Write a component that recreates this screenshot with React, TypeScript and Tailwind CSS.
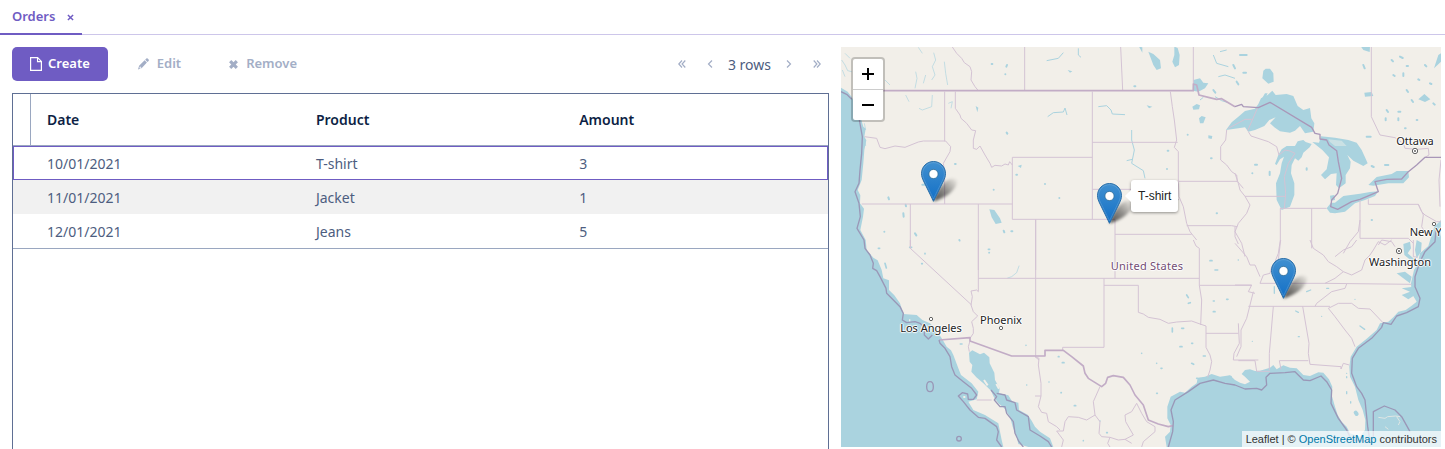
import React from "react";

const orders = [
  { date: "10/01/2021", product: "T-shirt", amount: 3 },
  { date: "11/01/2021", product: "Jacket", amount: 1 },
  { date: "12/01/2021", product: "Jeans", amount: 5 },
];

// Positions on the 600 x 400 map canvas.
const markers = [
  { name: "Jacket", x: 80, y: 114 },
  { name: "T-shirt", x: 256, y: 136 },
  { name: "Jeans", x: 430, y: 211 },
];

const cities = [
  { name: "Ottawa", x: 574, y: 94, dot: [574, 104], capital: true },
  { name: "New York", x: 593, y: 185, dot: [593, 177], capital: false },
  { name: "Washington", x: 559, y: 215, dot: [558, 204], capital: true },
  { name: "Los Angeles", x: 90, y: 281, dot: [90, 272], capital: false },
  { name: "Phoenix", x: 160, y: 273, dot: [160, 281], capital: false },
];

const place = (x: number, y: number) => ({ left: `${x / 6}%`, top: `${y / 4}%` });

function FileIcon() {
  return (
    <svg width="12" height="14" viewBox="0 0 12 14" fill="none" stroke="currentColor" aria-hidden="true">
      <path d="M.6.6h7l3.8 3.8v9H.6z" strokeWidth="1.2" />
      <path d="M7.5.8v3.8h3.8" strokeWidth="1.1" />
    </svg>
  );
}

function PencilIcon() {
  return (
    <svg width="11" height="12" viewBox="0 0 11 12" fill="currentColor" aria-hidden="true">
      <path d="M7.200 1.700 8.300.6q.7-.6 1.400 0l.9.900q.6.7 0 1.400L9.500 4zM6.600 2.300 8.900 4.600 3.600 10.200 0 11.400 1.100 7.700zM1.900 8.500l-.5 1.500.6.6 1.300-.4v-.8h-.8v-.9z" fillRule="evenodd" />
    </svg>
  );
}

function CrossIcon({ size, thin }: { size: number; thin?: boolean }) {
  return (
    <svg width={size} height={size} viewBox="0 0 10 10" fill="none" stroke="currentColor" aria-hidden="true">
      <path d="M1.300 1.300 8.700 8.700M8.700 1.300 1.300 8.700" strokeWidth={thin ? 2.1 : 3.5} />
    </svg>
  );
}

function Chevrons({ double, flip }: { double?: boolean; flip?: boolean }) {
  return (
    <svg width="8" height="8" viewBox="0 0 8 8" fill="none" stroke="currentColor" strokeWidth="1.200" aria-hidden="true">
      <g transform={flip ? "matrix(-1 0 0 1 8 0)" : undefined}>
        {double ? <path d="M4 .5.8 4 4 7.500M7.300.5 4.100 4l3.200 3.500" /> : <path d="M6 .5 2.500 4 6 7.500" />}
      </g>
    </svg>
  );
}

function PageButton({ label, double, flip }: { label: string; double?: boolean; flip?: boolean }) {
  return (
    <button type="button" disabled aria-label={label} className="flex h-6 w-6 items-center justify-center text-[#a3aec6]">
      <Chevrons double={double} flip={flip} />
    </button>
  );
}

function Pin() {
  return (
    <svg className="block overflow-visible" width="25" height="41" viewBox="0 0 25 41" aria-hidden="true">
      <path d="M12.500 40.500C14 33 19 25 25 20c6-4 12-3 11 2-2 8-12 15-23.500 18.500z" fill="url(#pinShadow)" filter="url(#pinBlur)" />
      <path d="M12.500.5C5.800.5.5 5.800.5 12.600c0 2.700.9 5 2 7.300L12.500 40.300l10-20.400c1.100-2.300 2-4.600 2-7.300C24.500 5.800 19.200.5 12.500.5z" fill="url(#pinFill)" stroke="#2b6fa8" />
      <path d="M12.500 1.600c-6 0-10.900 4.900-10.900 11 0 2.400.8 4.600 1.900 6.900l9 18.300 9-18.300c1.100-2.300 1.900-4.500 1.900-6.900 0-6.100-4.900-11-10.900-11z" fill="none" stroke="#fff" strokeOpacity=".14" />
      <circle cx="12.500" cy="13" r="4.600" fill="#fff" stroke="#2e6c97" strokeWidth=".8" />
    </svg>
  );
}

function MapDrawing() {
  return (
    <svg className="block h-full w-full" viewBox="0 0 1800 1200" fill="none" aria-hidden="true">
      <defs>
        <linearGradient id="pinFill" x1="0" y1="0" x2="0" y2="1">
          <stop offset="0" stopColor="#4190d0" />
          <stop offset="1" stopColor="#126fc6" />
        </linearGradient>
        <linearGradient id="pinShadow" x1="0" y1="1" x2="1" y2="0">
          <stop offset="0" stopColor="#000" stopOpacity=".7" />
          <stop offset=".5" stopColor="#000" stopOpacity=".4" />
          <stop offset="1" stopColor="#000" stopOpacity="0" />
        </linearGradient>
        <filter id="pinBlur" x="-30%" y="-30%" width="160%" height="160%">
          <feGaussianBlur stdDeviation="1.500" />
        </filter>
      </defs>
      <rect width="1800" height="1200" fill="#f2efe9" />

      {/* Oceans */}
      <g fill="#aad3df">
        <path d="M0 122 20 134 32 150 48 180 60 215 67 239 74 245 70 269 76 280 70 309 67 349 62 399 50 429 58 445 57 469 69 485 66 509 58 549 74 579 77 609 97 632 110 640 122 669 127 694 144 700 144 729 160 745 177 769 187 801 227 804 244 819 267 829 280 842 292 859 304 877 317 899 330 910 337 924 352 964 360 984 392 1009 412 1034 407 1057 382 1064 397 1089 432 1104 472 1129 482 1179 487 1200 0 1200z" />
        <g transform="translate(-18 579)">
          <path d="M402 338 412 331 435 343 447 338 463 352 464 370 478 398 480 420 494 445 492 460 520 466 532 485 550 488 552 510 578 524 590 542 600 560 615 575 645 595 655 621 580 621 550 612 545 590 533 560 525 530 508 505 490 490 476 470 468 452 445 430 424 412 409 395 412 375 404 365z" />
        </g>
        <g transform="translate(1182 579)">
          <path d="M-205 621-210 590-195 575-193 555-203 535-203 500-193 470-165 455-150 458-130 440-115 430-112 413-90 410-70 402-45 410-15 406 0 420 15 428 30 433 45 425 30 410 20 402 30 390 45 388 60 393 75 392 105 383 115 375 125 388 145 376 165 383 185 385 205 405 225 408 250 397 265 398 282 418 292 440 290 465 300 500 308 525 320 545 335 560 345 580 375 590 390 570 391 540 383 510 370 480 360 440 345 410 343 380 347 350 365 320 395 296 425 270 435 250 460 245 475 232 490 215 512 210 530 197 545 185 530 160 528 130 537 90 548 72 555 40 580 18 590-15 598-40 618-60 618 621z" />
          <path d="M505 12 525 5 528 25 518 40 535 55 550 65 540 80 520 55 508 45zM545 0 560 8 558 35 545 55 540 30zM485 100 510 95 530 110 525 130 505 115zM500 145 535 140 540 165 520 178 500 165 525 155z" />
        </g>
      </g>

      {/* Lakes */}
      <g transform="translate(1182 -21)" fill="#aad3df">
        <path d="M-27 270-10 247 10 230 30 213 60 206 70 192 78 175 98 165 112 152 122 165 155 162 175 168 188 198 205 210 225 204 229 235 238 250 235 275 210 280 195 258 180 272 165 278 135 274 118 262 105 250 122 232 103 240 88 258 60 270 40 275 30 262 10 265z" />
        <path d="M120 372 130 345 140 328 155 318 180 318 188 304 205 300 212 306 230 312 224 322 205 338 200 352 190 362 180 355 170 375 168 400 178 430 178 465 165 500 140 510 125 480 123 430 135 400 140 370 147 350 135 358 125 375z" />
        <path d="M232 306 252 308 258 289 300 293 340 300 365 308 380 330 390 352 398 370 385 378 355 362 337 345 347 365 345 385 332 405 332 430 312 445 303 435 305 400 288 402 270 418 258 405 275 388 282 352 262 330z" />
        <path d="M275 505 288 488 300 488 325 468 375 461 405 456 430 454 420 468 390 480 360 490 330 515 300 520 285 518zM400 435 425 411 470 402 485 393 520 393 522 412 505 430 460 430 415 437zM85 92 92 86 105 86 115 100 116 125 100 131 82 115zM378 20H405L404 36 385 30zM388 158 410 156 415 168 390 170zM550 178 568 162 586 178 570 186zM597 85 610 45 618 40V65zM285 467 298 465 300 480 287 482zM75 185 90 160 98 160 90 178z" />
        <path d="M280 298 320 302 335 318 300 318 285 306z" fill="#e3ece8" opacity=".55" />
      </g>
      <g transform="translate(582 -21)" fill="#aad3df">
        <path d="M340 35 355 42 375 60 378 85 365 90 355 75zM418 20 428 24 434 45 432 75 420 82 412 65 418 45zM312 20 322 22 322 38zM475 120 495 115 505 128 520 130 510 145 490 155 473 152zM472 200 485 192 495 196 492 208 475 209zM492 235 500 228 512 232 505 250 495 250zM520 286 532 288 530 297 520 295zM98 90 112 94 105 98zM335 196 352 200 342 205z" />
        <path d="M190 200 215 197 228 210 232 222 270 224M38 230 55 218 85 216 90 204 96 225M290 270V300L298 330 290 370 325 392 330 415M275 362 292 358M35 62 70 55 85 38M130 25V45L138 52M535 45 545 70 580 80M555 35 575 30M495 180 505 172M540 170 560 182 580 188M550 110 570 105 600 115" stroke="#aad3df" strokeWidth="3" fill="none" />
      </g>
      <g transform="translate(-18 -21)" stroke="#aad3df">
        <path d="M463 508 478 510 495 535 500 548 482 552 470 532zM422 198 430 203 427 217zM548 378 560 374 558 384z" fill="#aad3df" stroke="none" />
        <path d="M296 38 302 60 292 80 300 105 290 120M242 95 246 115 240 145M328 65 332 100 338 135M250 22 262 40M20 60 30 75 38 92 50 95M22 90 30 110M30 40 45 55M292 165 290 200 262 210 252 205M340 190 352 185 348 205M272 105 265 130M212 165 222 185M150 120 165 135M88 250 92 270M90 300 92 318" strokeWidth="2" />
      </g>
      <g stroke="#aad3df" strokeWidth="6" strokeLinecap="round">
        <path transform="translate(-18 -21)" d="M470 72h2M516 75l-2 5M511 103h0M515 278l2 3M360 372h2M262 434h6M160 472l2 6M212 494l1 5M205 520l1 10M240 580l4 6M506 572l2 5M529 574h3M476 449h0M544 404h2M373 600h0M148 575h0" />
        <path transform="translate(582 -21)" d="M298 139h3M398 332h2M396 387h0M458 284h0M528 355h2M30 432h0M73 474h0M545 520h1M595 75l5 10M605 125l5 8M535 150l6 8" />
        <path transform="translate(1182 -21)" d="M15 45h20M25 98h8M385 75l4 10M495 50l8 4M475 105l4 3M505 100v8M515 150l4 6M530 180l4 6M455 210l4 6M452 235v6M490 215h6M395 290h12M490 235v6M510 265h2M545 240h2M595 190l4 4M570 75l4 4M450 375h10M410 378l6 3M60 374h6M104 395v10M52 400h0M410 540h1M585 130l4 2M470 60l4 4M515 78h4M550 118l3 2M215 385v4" />
        <path transform="translate(-18 579)" d="M460 28h4M462 38h1M270 40v2M260 71h2M374 2h0M130 25h4M150 70l4 14M224 22h6M376 312h5M573 316h0M575 435h0" strokeWidth="5" />
        <path transform="translate(-18 579)" d="M552 78 545 98 530 110 518 114" strokeWidth="2" />
        <path transform="translate(582 579)" d="M455 165l5 8M460 190l6-2M525 62h6M540 90h8M535 183h3M535 215h5M575 178h4M412 264v12M440 265h6M435 320h6M470 310h3M470 370l6 3M505 348h6M365 370h0M378 385h3M320 340h0M70 350h2M82 368h5M42 426h0M78 458h1M118 497h4M215 578h2M195 543h0M145 602h0M365 460h2M485 415h2M582 410h6M610 60h0" strokeWidth="5" />
        <path transform="translate(1182 579)" d="M375 258l14 10M360 178h0M190 290h3M52 304h0M260 229h0M335 410v3M335 455v6M347 485v4M335 400h0M40 395h16M60 410h12M215 155l12-5M275 145h6M182 213l8 4M118 140v20" strokeWidth="4" />
        <path transform="translate(1182 579)" d="M362 518l3 4" strokeWidth="12" />
      </g>

      {/* State borders */}
      <g stroke="#d4c3d4" strokeWidth="3" strokeLinejoin="round">
        <path transform="translate(-18 -21)" d="M569 21V152M352 21 365 40 380 55 388 68 405 80 410 95 408 120 420 140 430 152M329 155V304M88 290 125 295 135 322 150 326 180 318 210 322 250 306 265 303H332L347 320 345 335 325 370 329 395V492M361 155V205L375 225 378 235 395 250 410 270 422 272 415 300 415 325 425 328 435 318 450 345 465 370 470 382 480 376 500 378 510 372 520 375 524 365 532 375M532 352V538M532 352H772M532 538H840M602 538V690M80 492H532M430 492V690M226 492V625" />
        <path transform="translate(582 -21)" d="M257 21 263 150M475 21V132M172 155V538M172 307H428M172 448H330L365 450 400 458 432 480M406 155 412 200 418 240 425 300 418 322 430 335V424L432 470 445 500 455 550 465 575 485 600M240 583H470M240 538V715M2 538V947M430 424H607M455 557H590L607 560M575 270 572 300 557 320 557 360 575 375 590 395 605 405 607 424 625 445M600 560 600 590 610 612" />
        <path transform="translate(1182 -21)" d="M68 203 38 272M-20 265 30 238H50M40 275 48 288 100 305 125 320 132 345 150 330 165 333 180 340 160 370 148 410 152 460 148 505M30 469H152M135 505H275M136 505V600L130 640 110 690M230 505V625M0 400 10 430 15 450 30 469 45 495 35 520 10 550 0 575 20 610 30 650M375 478V595H520L535 610M375 540 370 575 345 605 325 640M400 478V493H550L560 515 570 525 605 545M550 493 565 525 560 560 575 585M409 21V230L435 285 480 293 505 310 510 325 545 328 580 325 582 345 570 352M430 615 440 600 470 605 480 620M618 360 612 420 615 500M605 545 618 545" />
        <path transform="translate(-18 579)" d="M226 0V25L410 195M430 0V155L425 150 408 153 412 170 408 195 415 215 428 228 410 245 415 265 415 280 405 295M430 115H602M405 303 400 320 403 335M425 480H470M600 350 612 360" />
        <path transform="translate(582 579)" d="M2 115H493M207 115V322H83V331M207 136H310V217L325 222 340 232 375 238 400 250 425 246 470 243 495 252 513 258V322L525 345 530 365 525 390 518 412M475 0 483 18 493 25V136L500 180 497 255M493 136H650M513 280H610M610 250 613 310 597 340 595 360H670M0 350 12 355 10 375 18 430 18 468 0 468M18 468 10 500 20 517 35 520 40 545 65 560 75 570M65 573H85L90 545 100 530 130 532 155 540 180 525 195 545 192 580 200 590 225 592 250 600 270 598 290 610M195 440 175 485 180 525M305 490 290 515 270 525 272 545 295 585 270 598M305 490 320 520 335 545 360 560 360 575 325 605 320 621M65 573 85 600 80 621M225 592 218 610 225 621" />
        <path transform="translate(1182 579)" d="M55 155 45 195 35 235 18 270 18 320 5 350M10 362H60L65 394H105M40 199H285M0 135H50L40 155 60 160M75 130H270L530 133M335 132 330 145 290 155 245 190 240 199M115 199 103 340V390M203 199 222 310 220 340 225 373 318 380V387L325 370 343 375M133 362H220M133 362 138 388M280 205 310 190 350 190 370 205 405 207 443 247M280 205 300 230 330 270 350 295 360 320M75 130 85 105 105 100 110 80 130 60 137 0M225 0 235 25 265 45 280 65 305 80 325 95 300 115 270 130M300 50 325 30 350 20 365 0M325 95 350 105 380 90 390 60 405 45 415 30 430 5 450 15 470 0M535 0V50L548 52M0 10 35 50 45 75 60 75 75 110" />
      </g>

      {/* Country borders */}
      <g stroke="#c2acc6" strokeWidth="5" strokeLinejoin="round">
        <path d="M127 131H1057V111L1067 114 1074 144 1102 151 1127 157 1142 155 1162 167 1182 179" />
        <path transform="translate(1182 -21)" d="M0 200 20 193 25 200 70 203 105 187 230 262 240 280 255 283 255 297 275 300 282 315 305 332 310 365 320 415 308 460 290 480 287 500 308 508 350 485 375 478 430 455 420 425 455 418 500 417 520 395 545 375 570 352H618" stroke="#a997b8" strokeWidth="4" />
        <path transform="translate(-18 579)" d="M312 300 405 293V303L530 348H630V331H685L710 350 745 378 750 400 760 415 800 440 812 430 818 412 835 407 865 412 885 435 900 465 925 495 940 540 970 552 1000 560 1014 557" />
      </g>

      {/* Maritime borders */}
      <g stroke="#9a97b7" strokeWidth="4" strokeLinejoin="round">
        <path transform="translate(-18 -21)" d="M18 155 35 163 50 178M73 240 82 290 80 340 75 390 72 430 60 455 72 490 76 530 66 565 87 600 90 625 105 645 115 670 113 685 125 692 135 710 153 745 155 760 195 800 205 820 202 840 215 848 240 845 255 850 268 862 268 885 280 897 292 885M312 900 315 910 330 925 345 950 350 980 360 1005 385 1025 410 1045 425 1065 415 1078 400 1078 398 1062 382 1058 370 1068 385 1085 405 1110 430 1132 450 1135 485 1160 490 1175 485 1200 500 1221" />
        <path transform="translate(-18 579)" d="M275 440q0-15 10-15t10 15-10 15-10-15M365 596a7 7 0 1 0 14 0 7 7 0 1 0-14 0M468 450 485 470 478 480 495 500 510 500 515 520 535 545 540 580 552 605 565 621M485 460 510 465 515 480 540 488 545 510 580 530 585 570 615 588 640 605 650 621" />
        <path transform="translate(1182 579)" d="M-200 621-187 575-185 545-192 510-180 480-140 455-105 430-65 420-30 430 0 435 30 447 65 445 80 450 95 435 93 412 105 400 150 398 180 395 205 420 225 422 258 408 275 425 290 450 288 490 310 535 335 570 350 600 405 605 398 560 390 480 380 460 365 440 350 400 352 355 370 325 410 295 440 262 445 248 468 253 485 228 515 218 550 200 555 175 540 140 540 110 555 65 570 35 600 5 603-30M415 600V515L448 498 480 510 500 530 525 575" />
      </g>
      <path transform="translate(1182 579)" d="M430 532 450 535 458 530 482 528 495 530M485 530 495 545 490 555M450 560 460 568" stroke="#dfe6e4" strokeWidth="3" />
      <path transform="translate(-18 579)" d="M447 420 458 436M484 432 492 446M222 241h4M276 272h4M388 468v6" stroke="#f2efe9" strokeWidth="6" />

      {/* City dots */}
      <g fill="#fff" stroke="#666" strokeWidth="3">
        {cities.map((c) => (
          <g key={c.name}>
            <circle cx={c.dot[0] * 3} cy={c.dot[1] * 3} r={c.capital ? 8 : 5} />
            {c.capital && <circle cx={c.dot[0] * 3} cy={c.dot[1] * 3} r="2" />}
          </g>
        ))}
      </g>
    </svg>
  );
}

const halo =
  "[text-shadow:1px_0_1px_#fff,-1px_0_1px_#fff,0_1px_1px_#fff,0_-1px_1px_#fff,0_0_2px_#fff]";

function OrdersMap() {
  return (
    <section
      aria-label="Map"
      className="relative aspect-3/2 overflow-hidden font-['Liberation_Sans',sans-serif] text-[#333]"
    >
      <MapDrawing />
      {cities.map((c) => (
        <span
          key={c.name}
          style={place(c.x, c.y)}
          className={`absolute -translate-x-1/2 -translate-y-1/2 font-['Noto_Sans',sans-serif] text-[11px] leading-4 whitespace-nowrap text-[#222] ${halo}`}
        >
          {c.name}
        </span>
      ))}
      <span
        style={place(306, 219)}
        className={`absolute -translate-x-1/2 -translate-y-1/2 font-['Noto_Sans',sans-serif] text-[11px] leading-4 tracking-wide whitespace-nowrap text-[#734c73] ${halo}`}
      >
        United States
      </span>
      {markers.map((m) => (
        <button key={m.name} type="button" aria-label={m.name} style={place(m.x, m.y)} className="absolute">
          <Pin />
        </button>
      ))}

      <div
        role="tooltip"
        style={place(290, 133)}
        className="absolute rounded-[3px] bg-white p-[7px] text-[12px] leading-[18px] whitespace-nowrap text-[#222] shadow-[0_1px_3px_rgba(0,0,0,0.4)]"
      >
        <span className="absolute top-1/2 -left-1.5 -translate-y-1/2 border-y-6 border-r-6 border-y-transparent border-r-white" />
        T-shirt
      </div>

      <div className="absolute top-2.5 left-2.5 flex flex-col divide-y divide-[#ccc] overflow-hidden rounded-[4px] border-2 border-black/20 bg-white bg-clip-padding text-black">
        <button type="button" aria-label="Zoom in" className="flex h-[31px] w-[30px] items-center justify-center">
          <svg width="12" height="12" viewBox="0 0 12 12" stroke="currentColor" strokeWidth="2" aria-hidden="true">
            <path d="M0 6h12M6 0v12" />
          </svg>
        </button>
        <button type="button" aria-label="Zoom out" className="flex h-[30px] w-[30px] items-center justify-center">
          <svg width="12" height="12" viewBox="0 0 12 12" stroke="currentColor" strokeWidth="2" aria-hidden="true">
            <path d="M0 6h12" />
          </svg>
        </button>
      </div>

      <div className="absolute right-0 bottom-0 bg-white/70 px-1 text-[11px] leading-4 whitespace-nowrap">
        Leaflet | ©{" "}
        <a href="#osm" className="text-[#0078a8]">
          OpenStreetMap
        </a>{" "}
        contributors
      </div>
    </section>
  );
}

export default function App() {
  return (
    <div className="flex min-h-screen flex-col bg-white font-['Noto_Sans',sans-serif] text-[14px] text-[#4d5d80]">
      <nav className="flex h-[35px] border-b border-[#cdc6ea]">
        <div className="-mb-px flex items-center gap-3 border-b-2 border-[#6f5cc3] pr-2 pl-3 text-[13px] font-semibold text-[#6f5cc3]">
          <a href="#orders">Orders</a>
          <button type="button" aria-label="Close Orders" className="pt-0.5">
            <CrossIcon size={7} thin />
          </button>
        </div>
      </nav>

      <main className="grid flex-1 grid-cols-[817fr_600fr] gap-3 pt-3 pr-1 pl-3">
        <div className="flex min-w-0 flex-col gap-3">
          <div className="flex h-[34px] items-center justify-between">
            <div className="flex gap-3 text-[13px] font-semibold">
              <button type="button" className="flex h-[34px] items-center gap-1.5 rounded-[5px] bg-[#6f5cc3] px-[18px] text-white">
                <FileIcon />
                Create
              </button>
              <button type="button" disabled className="flex h-[34px] items-center gap-2 px-[18px] text-[#a3aec6]">
                <PencilIcon />
                Edit
              </button>
              <button type="button" disabled className="flex h-[34px] items-center gap-2 px-[18px] text-[#a3aec6]">
                <CrossIcon size={9} />
                Remove
              </button>
            </div>
            <div className="flex items-center gap-1">
              <PageButton label="First page" double />
              <PageButton label="Previous page" />
              <span className="px-0.5">3 rows</span>
              <PageButton label="Next page" flip />
              <PageButton label="Last page" double flip />
            </div>
          </div>

          <div className="flex-1 border-x border-t border-[#5f6f94]">
            <table className="w-full table-fixed border-separate border-spacing-0 text-left">
              <colgroup>
                <col className="w-[18px]" />
                <col className="w-[33%]" />
                <col className="w-[32.3%]" />
                <col />
              </colgroup>
              <thead className="font-semibold text-[#0d1f45]">
                <tr className="h-[52px]">
                  <td className="border-r border-b border-[#9aa7c0]" />
                  <th scope="col" className="border-b border-[#9aa7c0] px-4 font-semibold">Date</th>
                  <th scope="col" className="border-b border-[#9aa7c0] px-4 font-semibold">Product</th>
                  <th scope="col" className="border-b border-[#9aa7c0] px-4 font-semibold">Amount</th>
                </tr>
              </thead>
              <tbody>
                {orders.map((o, i) => (
                  <tr
                    key={o.date}
                    className={
                      i === 0
                        ? "h-[34px] outline-1 -outline-offset-1 outline-[#6f5cc3]"
                        : i === 1
                          ? "h-[34px] bg-[#f1f1f1]"
                          : "h-[35px] [&>td]:border-b [&>td]:border-[#9aa7c0]"
                    }
                  >
                    <td />
                    <td className="px-4">{o.date}</td>
                    <td className="px-4">{o.product}</td>
                    <td className="px-4">{o.amount}</td>
                  </tr>
                ))}
              </tbody>
            </table>
          </div>
        </div>

        <OrdersMap />
      </main>
    </div>
  );
}
